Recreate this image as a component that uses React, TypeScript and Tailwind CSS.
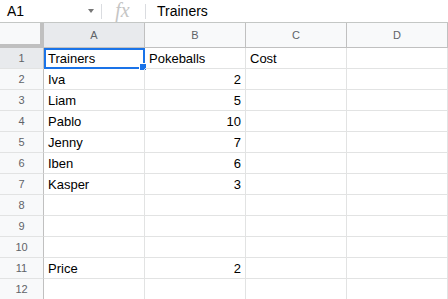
import React from "react";

const cols = ["A", "B", "C", "D"];

const rows: [string, string, string, string][] = [
  ["Trainers", "Pokeballs", "Cost", ""],
  ["Iva", "2", "", ""],
  ["Liam", "5", "", ""],
  ["Pablo", "10", "", ""],
  ["Jenny", "7", "", ""],
  ["Iben", "6", "", ""],
  ["Kasper", "3", "", ""],
  ["", "", "", ""],
  ["", "", "", ""],
  ["", "", "", ""],
  ["Price", "2", "", ""],
  ["", "", "", ""],
];

const isNum = (v: string) => v !== "" && !isNaN(Number(v));

export default function App() {
  return (
    <div className="w-[448px] h-[299px] overflow-hidden bg-white font-['Liberation_Sans',Arial,sans-serif] text-black">
      {/* formula bar */}
      <div className="flex items-center h-[23px] border-b border-[#c4c7c5] text-[14px]">
        <div className="w-[101px] flex items-center pl-[7px] pr-[7px] h-full">
          <span className="flex-1">A1</span>
          <span className="w-0 h-0 border-l-[3px] border-r-[3px] border-t-[4px] border-l-transparent border-r-transparent border-t-[#777]" />
        </div>
        <div className="w-px h-[15px] bg-[#dadce0]" />
        <div className="w-[43px] flex justify-center text-[#c5c5c5] font-['Liberation_Serif',serif] italic text-[20px] leading-none pb-[2px] pr-[2px]">
          fx
        </div>
        <div className="w-px h-[15px] bg-[#dadce0]" />
        <div className="pl-[11px]">Trainers</div>
      </div>

      {/* grid */}
      <div className="grid grid-cols-[44px_101px_101px_101px_101px]">
        <div className="h-[25px] bg-[#f8f9fa] border-r-4 border-b-4 border-[#c0c0c0]" />
        {cols.map((c, i) => (
          <div
            key={c}
            className={`h-[25px] flex items-center justify-center text-[11px] text-[#5f6368] border-b border-r border-[#c0c0c0] ${i === 0 ? "bg-[#e8eaed]" : "bg-[#f8f9fa]"}`}
          >
            {c}
          </div>
        ))}

        {rows.map((r, ri) => (
          <React.Fragment key={ri}>
            <div
              className={`h-[21px] flex items-center justify-center text-[11px] text-[#5f6368] border-r border-b border-r-[#c0c0c0] border-b-[#e2e3e3] ${ri === 0 ? "bg-[#e8eaed]" : "bg-[#f8f9fa]"}`}
            >
              {ri + 1}
            </div>
            {r.map((v, ci) => (
              <div
                key={ci}
                className={`relative h-[21px] flex items-end pb-[2px] px-[4px] text-[13px] leading-[15px] border-r border-b border-[#e2e3e3] ${isNum(v) ? "justify-end" : ""}`}
              >
                {v}
                {ri === 0 && ci === 0 && (
                  <>
                    <div className="absolute left-0 top-0 right-[-1px] bottom-[-1px] border-2 border-[#1a73e8]" />
                    <div className="absolute right-[-3px] bottom-[-3px] w-[6px] h-[6px] bg-[#1a73e8] border border-white box-content" />
                  </>
                )}
              </div>
            ))}
          </React.Fragment>
        ))}
      </div>
    </div>
  );
}
